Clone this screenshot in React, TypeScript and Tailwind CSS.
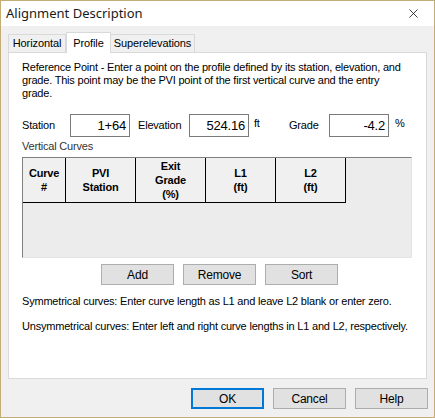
import { X } from "lucide-react";

const font = { fontFamily: '"Liberation Sans", Arial, sans-serif' };

function Field({ value }: { value: string }) {
  return (
    <div className="w-[60px] h-[23px] border border-[#7a7a7a] bg-white flex items-center justify-end pr-[3px] text-[13px] text-black">
      {value}
    </div>
  );
}

function Btn({ label, primary }: { label: string; primary?: boolean }) {
  return (
    <div
      className={
        "w-[73px] h-[21px] flex items-center justify-center bg-[#e1e1e1] text-[12px] tracking-[-0.2px] text-black " +
        (primary ? "border-2 border-[#0078d7]" : "border border-[#adadad]")
      }
    >
      {label}
    </div>
  );
}

const cols = [
  { w: "w-[43px]", lines: ["Curve", "#"] },
  { w: "w-[70px]", lines: ["PVI", "Station"] },
  { w: "w-[70px]", lines: ["Exit", "Grade", "(%)"] },
  { w: "w-[70px]", lines: ["L1", "(ft)"] },
  { w: "w-[70px]", lines: ["L2", "(ft)"] },
];

export default function App() {
  return (
    <div style={font} className="w-[435px] h-[418px] border border-[#c4ad74] flex flex-col bg-[#f0f0f0] text-black">
      {/* title bar */}
      <div className="h-[25px] bg-white flex items-center justify-between pl-[5px] pr-[13px]">
        <span className="text-[13px] text-[#1a1a1a]" style={{ fontFamily: '"Noto Sans", "Liberation Sans", sans-serif' }}>
          Alignment Description
        </span>
        <X size={15} strokeWidth={1.2} className="text-black" />
      </div>

      <div className="flex-1 flex flex-col px-[7px]">
        {/* tabs */}
        <div className="flex items-end h-[26px] text-[11px] tracking-[-0.1px]">
          <div className="h-[18px] w-[58px] flex items-center justify-center border border-b-0 border-[#d9d9d9] bg-[#f0f0f0]">Horizontal</div>
          <div className="relative z-10 h-[21px] w-[45px] -mb-px flex items-center justify-center border border-b-0 border-[#d9d9d9] bg-white">Profile</div>
          <div className="h-[18px] w-[84px] flex items-center justify-center border border-b-0 border-l-0 border-[#d9d9d9] bg-[#f0f0f0]">Superelevations</div>
        </div>

        {/* panel */}
        <div className="h-[327px] bg-white border border-[#d9d9d9] pl-[13px] pt-[8px] text-[11px] tracking-[-0.2px]">
          <p className="leading-[13px] w-[385px]">
            Reference Point - Enter a point on the profile defined by its station, elevation, and grade. This point may be the PVI point of the first vertical curve and the entry grade.
          </p>

          <div className="flex items-start mt-[14px] h-[23px]">
            <span className="mt-[3px] w-[48px]">Station</span>
            <Field value="1+64" />
            <span className="mt-[3px] ml-[8px] w-[51px]">Elevation</span>
            <Field value="524.16" />
            <span className="mt-[1px] ml-[5px] w-[35px]">ft</span>
            <span className="mt-[3px] w-[40px]">Grade</span>
            <Field value="-4.2" />
            <span className="mt-[1px] ml-[6px]">%</span>
          </div>

          <div className="mt-[3px] leading-[13px] text-[#333]">Vertical Curves</div>

          {/* grid */}
          <div className="mt-[4px] w-[390px] h-[101px] bg-[#ececec] border border-t-[#808080] border-l-[#808080] border-r-[#e3e3e3] border-b-[#e3e3e3]">
            <div className="flex h-[45px] border-b border-black w-fit">
              {cols.map((c, i) => (
                <div
                  key={i}
                  className={c.w + " flex flex-col items-center justify-center font-bold leading-[14px] border-r border-black bg-[#f0f0f0]"}
                >
                  {c.lines.map((l) => (
                    <span key={l}>{l}</span>
                  ))}
                </div>
              ))}
            </div>
          </div>

          <div className="flex gap-[9px] ml-[79px] mt-[6px]">
            <Btn label="Add" />
            <Btn label="Remove" />
            <Btn label="Sort" />
          </div>

          <p className="mt-[10px] leading-[13px]">Symmetrical curves: Enter curve length as L1 and leave L2 blank or enter zero.</p>
          <p className="mt-[12px] leading-[13px]">Unsymmetrical curves: Enter left and right curve lengths in L1 and L2, respectively.</p>
        </div>

        {/* footer buttons */}
        <div className="flex justify-end gap-[9px] mt-[9px] mr-[-1px]">
          <Btn label="OK" primary />
          <Btn label="Cancel" />
          <Btn label="Help" />
        </div>
      </div>
    </div>
  );
}
